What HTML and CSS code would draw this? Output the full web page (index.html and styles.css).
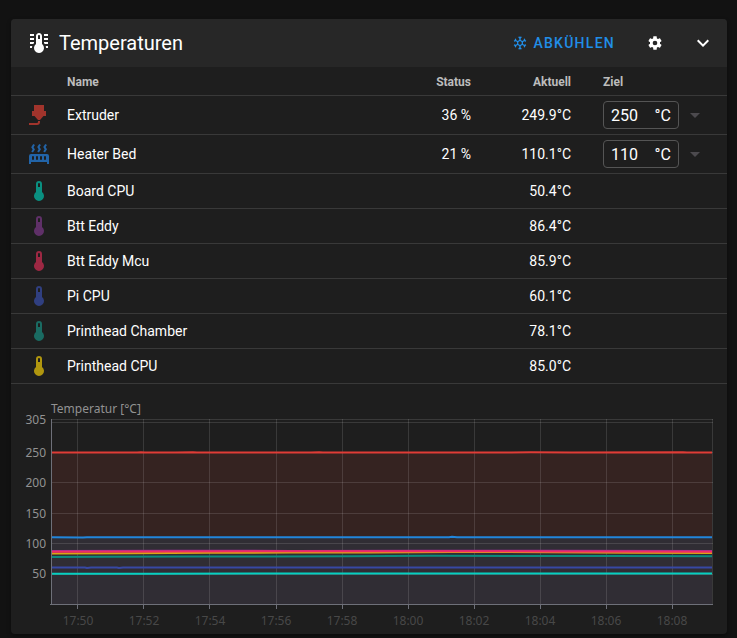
FILE: index.html
```html
<!DOCTYPE html>
<html lang="de">
<head>
  <meta charset="UTF-8">
  <meta name="viewport" content="width=device-width, initial-scale=1">
  <title>Temperaturen</title>
  <link rel="stylesheet" href="styles.css">
</head>
<body>

  <svg class="symbols" aria-hidden="true">
    <symbol id="thermometer" viewBox="0 0 24 24">
      <path d="M15 13V5A3 3 0 0 0 9 5V13A5 5 0 1 0 15 13M12 4A1 1 0 0 1 13 5V8H11V5A1 1 0 0 1 12 4Z"/>
    </symbol>
  </svg>

  <main class="card">
    <header class="toolbar">
      <svg class="icon" viewBox="0 0 24 24" aria-hidden="true"><path d="M17 3H21V5H17V3M17 7H21V9H17V7M17 11H21V13H17.75L17 12.1V11M21 15V17H19C19 16.31 18.9 15.63 18.71 15H21M7 3V5H3V3H7M7 7V9H3V7H7M7 11V12.1L6.25 13H3V11H7M3 15H5.29C5.1 15.63 5 16.31 5 17H3V15M15 13V5C15 3.34 13.66 2 12 2S9 3.34 9 5V13C6.79 14.66 6.34 17.79 8 20S12.79 22.66 15 21 17.66 16.21 16 14C15.72 13.62 15.38 13.28 15 13M12 4C12.55 4 13 4.45 13 5V8H11V5C11 4.45 11.45 4 12 4Z"/></svg>
      <h1>Temperaturen</h1>
      <button class="cool-btn" type="button">
        <svg class="icon small" viewBox="0 0 24 24" aria-hidden="true"><path d="M20.79,13.95L18.46,14.57L16.46,13.44V10.56L18.46,9.43L20.79,10.05L21.31,8.12L19.54,7.65L20,5.88L18.07,5.36L17.45,7.69L15.45,8.82L13,7.38V5.12L14.71,3.41L13.29,2L12,3.29L10.71,2L9.29,3.41L11,5.12V7.38L8.5,8.82L6.5,7.69L5.92,5.36L4,5.88L4.47,7.65L2.7,8.12L3.22,10.05L5.55,9.43L7.55,10.56V13.45L5.55,14.58L3.22,13.96L2.7,15.89L4.47,16.36L4,18.12L5.93,18.64L6.55,16.31L8.55,15.18L11,16.62V18.88L9.29,20.59L10.71,22L12,20.71L13.29,22L14.7,20.59L13,18.88V16.62L15.5,15.17L17.5,16.3L18.12,18.63L20,18.12L19.53,16.35L21.3,15.88L20.79,13.95M9.5,10.56L12,9.11L14.5,10.56V13.44L12,14.89L9.5,13.44V10.56Z"/></svg>
        Abkühlen
      </button>
      <button class="icon-btn" type="button" aria-label="Einstellungen">
        <svg class="icon small" viewBox="0 0 24 24" aria-hidden="true"><path d="M12,15.5A3.5,3.5 0 0,1 8.5,12A3.5,3.5 0 0,1 12,8.5A3.5,3.5 0 0,1 15.5,12A3.5,3.5 0 0,1 12,15.5M19.43,12.97C19.47,12.65 19.5,12.33 19.5,12C19.5,11.67 19.47,11.34 19.43,11L21.54,9.37C21.73,9.22 21.78,8.95 21.66,8.73L19.66,5.27C19.54,5.05 19.27,4.96 19.05,5.05L16.56,6.05C16.04,5.66 15.5,5.32 14.87,5.07L14.5,2.42C14.46,2.18 14.25,2 14,2H10C9.75,2 9.54,2.18 9.5,2.42L9.13,5.07C8.5,5.32 7.96,5.66 7.44,6.05L4.95,5.05C4.73,4.96 4.46,5.05 4.34,5.27L2.34,8.73C2.21,8.95 2.27,9.22 2.46,9.37L4.57,11C4.53,11.34 4.5,11.67 4.5,12C4.5,12.33 4.53,12.65 4.57,12.97L2.46,14.63C2.27,14.78 2.21,15.05 2.34,15.27L4.34,18.73C4.46,18.95 4.73,19.03 4.95,18.95L7.44,17.94C7.96,18.34 8.5,18.68 9.13,18.93L9.5,21.58C9.54,21.82 9.75,22 10,22H14C14.25,22 14.46,21.82 14.5,21.58L14.87,18.93C15.5,18.67 16.04,18.34 16.56,17.94L19.05,18.95C19.27,19.03 19.54,18.95 19.66,18.73L21.66,15.27C21.78,15.05 21.73,14.78 21.54,14.63L19.43,12.97Z"/></svg>
      </button>
      <button class="icon-btn" type="button" aria-label="Einklappen">
        <svg class="icon" viewBox="0 0 24 24" aria-hidden="true"><path d="M7.41,8.58L12,13.17L16.59,8.58L18,10L12,16L6,10L7.41,8.58Z"/></svg>
      </button>
    </header>

    <table class="sensors">
      <thead>
        <tr>
          <th class="col-icon"></th>
          <th class="col-name">Name</th>
          <th class="col-num">Status</th>
          <th class="col-num">Aktuell</th>
          <th class="col-target">Ziel</th>
        </tr>
      </thead>
      <tbody>
        <tr>
          <td class="col-icon"><svg class="icon red" viewBox="0 0 24 24" aria-hidden="true"><path d="M7,2H17V8H19V13H16.5L13,17H11L7.5,13H5V8H7V2M10,22H2V20H10A1,1 0 0,0 11,19V18H13V19A3,3 0 0,1 10,22Z"/></svg></td>
          <td class="col-name">Extruder</td>
          <td class="col-num">36 %</td>
          <td class="col-num">249.9°C</td>
          <td class="col-target">
            <div class="target">
              <label class="field"><input type="text" value="250" aria-label="Ziel Extruder"><span>°C</span></label>
              <button class="menu-btn" type="button" aria-label="Presets Extruder"><svg class="icon" viewBox="0 0 24 24" aria-hidden="true"><path d="M7,10L12,15L17,10H7Z"/></svg></button>
            </div>
          </td>
        </tr>
        <tr>
          <td class="col-icon"><svg class="icon blue" viewBox="0 0 24 24" aria-hidden="true"><path d="M7.95,3L6.53,5.19L7.95,7.4H7.94L5.95,10.5L4.22,9.6L5.64,7.39L4.22,5.19L6.22,2.09L7.95,3M13.95,2.89L12.53,5.1L13.95,7.3L13.94,7.31L11.95,10.4L10.22,9.5L11.64,7.3L10.22,5.1L12.22,2L13.95,2.89M20,2.89L18.56,5.1L20,7.3V7.31L18,10.4L16.25,9.5L17.67,7.3L16.25,5.1L18.25,2L20,2.89M2,22V14A2,2 0 0,1 4,12H20A2,2 0 0,1 22,14V22H20V20H4V22H2M6,14A1,1 0 0,0 5,15V17A1,1 0 0,0 7,17V15A1,1 0 0,0 6,14M10,14A1,1 0 0,0 9,15V17A1,1 0 0,0 11,17V15A1,1 0 0,0 10,14M14,14A1,1 0 0,0 13,15V17A1,1 0 0,0 15,17V15A1,1 0 0,0 14,14M18,14A1,1 0 0,0 17,15V17A1,1 0 0,0 19,17V15A1,1 0 0,0 18,14Z"/></svg></td>
          <td class="col-name">Heater Bed</td>
          <td class="col-num">21 %</td>
          <td class="col-num">110.1°C</td>
          <td class="col-target">
            <div class="target">
              <label class="field"><input type="text" value="110" aria-label="Ziel Heater Bed"><span>°C</span></label>
              <button class="menu-btn" type="button" aria-label="Presets Heater Bed"><svg class="icon" viewBox="0 0 24 24" aria-hidden="true"><path d="M7,10L12,15L17,10H7Z"/></svg></button>
            </div>
          </td>
        </tr>
        <tr>
          <td class="col-icon"><svg class="icon teal"><use href="#thermometer"/></svg></td>
          <td class="col-name">Board CPU</td>
          <td class="col-num"></td>
          <td class="col-num">50.4°C</td>
          <td class="col-target"></td>
        </tr>
        <tr>
          <td class="col-icon"><svg class="icon purple"><use href="#thermometer"/></svg></td>
          <td class="col-name">Btt Eddy</td>
          <td class="col-num"></td>
          <td class="col-num">86.4°C</td>
          <td class="col-target"></td>
        </tr>
        <tr>
          <td class="col-icon"><svg class="icon pink"><use href="#thermometer"/></svg></td>
          <td class="col-name">Btt Eddy Mcu</td>
          <td class="col-num"></td>
          <td class="col-num">85.9°C</td>
          <td class="col-target"></td>
        </tr>
        <tr>
          <td class="col-icon"><svg class="icon indigo"><use href="#thermometer"/></svg></td>
          <td class="col-name">Pi CPU</td>
          <td class="col-num"></td>
          <td class="col-num">60.1°C</td>
          <td class="col-target"></td>
        </tr>
        <tr>
          <td class="col-icon"><svg class="icon green"><use href="#thermometer"/></svg></td>
          <td class="col-name">Printhead Chamber</td>
          <td class="col-num"></td>
          <td class="col-num">78.1°C</td>
          <td class="col-target"></td>
        </tr>
        <tr>
          <td class="col-icon"><svg class="icon yellow"><use href="#thermometer"/></svg></td>
          <td class="col-name">Printhead CPU</td>
          <td class="col-num"></td>
          <td class="col-num">85.0°C</td>
          <td class="col-target"></td>
        </tr>
      </tbody>
    </table>

    <svg class="chart" viewBox="0 0 716 250" role="img" aria-label="Temperaturverlauf">
      <!-- areas below extruder and bed -->
      <rect class="area-extruder" x="41" y="68" width="660" height="85"/>
      <rect class="area-bed" x="41" y="153" width="660" height="67"/>

      <path class="grid" d="M40 35.5H702M40 38.5H702M40 68.5H702M40 98.5H702M40 129.5H702M40 159.5H702M40 190.5H702"/>
      <path class="grid" d="M66.5 35V220M132.5 35V220M198.5 35V220M265.5 35V220M331.5 35V220M397.5 35V220M463.5 35V220M529.5 35V220M595.5 35V220M661.5 35V220M701.5 35V220"/>

      <path class="line" stroke="#0b8a7d" d="M41 173L90 172.8L180 172.5L260 172.6L340 172.3L420 171.8L500 172L600 172.1L701 172.3"/>
      <path class="line" stroke="#d9a514" d="M41 169.4L120 169.2L200 168.8L280 168.6L360 168.4L440 168L540 168.2L620 168.8L701 169"/>
      <path class="line" stroke="#9c2f96" d="M41 167L160 166.8L280 166.9L400 166.7L540 166.8L701 167"/>
      <path class="line" stroke="#f02a68" d="M41 167.8L160 167.4L280 167.2L400 167.2L540 167.4L701 167.8"/>
      <path class="line" stroke="#3748a4" d="M41 183.5L74 183.5L76 184L80 183.5L106 183.5L108 184L112 183.5L380 183.4L420 183.6L701 183.5"/>
      <path class="line" stroke="#06d0c1" d="M41 189.7L140 189.7L300 189.5L500 189.4L701 189.5"/>
      <path class="line" stroke="#2186dc" d="M41 153.3L72 153.5L76 153.3L438 153.3L441 152.8L446 153.3L701 153.3"/>
      <path class="line" stroke="#e03c36" d="M41 68.5L126 68.5L130 68.2L134 68.5L164 68.6L182 68.3L186 68.5L300 68.5L308 68.3L312 68.5L500 68.6L520 68.3L560 68.5L672 68.3L676 68.5L701 68.5"/>

      <path class="axis" d="M39 220.5H702M40.5 35V221M66.5 221V225M132.5 221V225M198.5 221V225M265.5 221V225M331.5 221V225M397.5 221V225M463.5 221V225M529.5 221V225M595.5 221V225M661.5 221V225"/>

      <text class="y-label start" x="40" y="29">Temperatur [°C]</text>
      <g class="y-label">
        <text x="35" y="40">305</text>
        <text x="35" y="73">250</text>
        <text x="35" y="103">200</text>
        <text x="35" y="134">150</text>
        <text x="35" y="164">100</text>
        <text x="35" y="194">50</text>
      </g>
      <g class="x-label">
        <text x="67" y="241">17:50</text>
        <text x="133" y="241">17:52</text>
        <text x="199" y="241">17:54</text>
        <text x="265" y="241">17:56</text>
        <text x="331" y="241">17:58</text>
        <text x="397" y="241">18:00</text>
        <text x="463" y="241">18:02</text>
        <text x="529" y="241">18:04</text>
        <text x="595" y="241">18:06</text>
        <text x="661" y="241">18:08</text>
      </g>
    </svg>
  </main>

</body>
</html>
```
FILE: styles.css
```css
* {
  box-sizing: border-box;
}
body {
  margin: 0;
  padding: 19px 10px 4px 11px;
  background-color: #121212;
  color: #fff;
  font-family: Roboto, sans-serif;
  font-size: 14px;
}
button {
  padding: 0;
  border: none;
  background: none;
  color: inherit;
  font-family: inherit;
  cursor: pointer;
}
.symbols {
  display: none;
}
.icon {
  display: block;
  width: 24px;
  height: 24px;
  fill: currentColor;
}
.icon.small {
  width: 16px;
  height: 16px;
}
.card {
  background-color: #1e1e1e;
  border-radius: 4px;
  overflow: hidden;
  box-shadow: 0 2px 4px rgba(0, 0, 0, 0.4);
}

/* toolbar */
.toolbar {
  display: flex;
  align-items: center;
  height: 48px;
  padding-left: 16px;
  background-color: #272727;
}
.toolbar h1 {
  flex: 1;
  margin: 0 0 0 8px;
  font-size: 20px;
  font-weight: 400;
}
.cool-btn {
  display: flex;
  align-items: center;
  gap: 5px;
  margin-right: 16px;
  color: #218ee8;
  font-size: 14px;
  font-weight: 500;
  letter-spacing: 0.09em;
  text-transform: uppercase;
}
.icon-btn {
  display: flex;
  align-items: center;
  justify-content: center;
  width: 48px;
  height: 48px;
}

/* sensor table */
.sensors {
  width: 100%;
  table-layout: fixed;
  border-collapse: separate;
  border-spacing: 0;
}
.sensors th,
.sensors td {
  padding: 0 16px;
  border-bottom: 1px solid #393939;
  text-align: left;
}
.sensors th {
  height: 29px;
  padding-top: 2px;
  color: #bcbcbc;
  font-size: 12px;
  font-weight: 700;
}
.sensors td {
  height: 35px;
}
.sensors .col-icon {
  width: 56px;
}
.sensors .col-name {
  padding-left: 0;
}
.sensors .col-num {
  width: 100px;
  padding-left: 0;
  text-align: right;
}
.sensors .col-target {
  width: 140px;
}
.target {
  display: flex;
  align-items: center;
  gap: 4px;
  padding: 5px 0;
}
.field {
  display: flex;
  align-items: center;
  width: 76px;
  height: 28px;
  padding: 0 7px;
  border: 1px solid #555;
  border-radius: 4px;
  font-size: 16px;
}
.field input {
  flex: 1;
  min-width: 0;
  padding: 0;
  border: none;
  outline: none;
  background: none;
  color: inherit;
  font: inherit;
}
.menu-btn {
  color: #4c4a4e;
}
.red { color: #a1342c; }
.blue { color: #2264a8; }
.teal { color: #0a8f80; }
.purple { color: #5f3068; }
.pink { color: #9d2843; }
.indigo { color: #303f80; }
.green { color: #1a6b62; }
.yellow { color: #b0960f; }

/* chart */
.chart {
  display: block;
  width: 100%;
  height: auto;
  font-family: "Noto Sans", sans-serif;
  font-size: 12px;
}
.area-extruder {
  fill: #352321;
}
.area-bed {
  fill: #302d34;
}
.grid {
  fill: none;
  stroke: rgba(255, 255, 255, 0.12);
}
.line {
  fill: none;
  stroke-width: 2;
}
.axis {
  fill: none;
  stroke: #6e7079;
}
.y-label {
  fill: #929292;
  text-anchor: end;
}
.y-label.start {
  text-anchor: start;
}
.x-label {
  fill: #484848;
  text-anchor: middle;
}
```
